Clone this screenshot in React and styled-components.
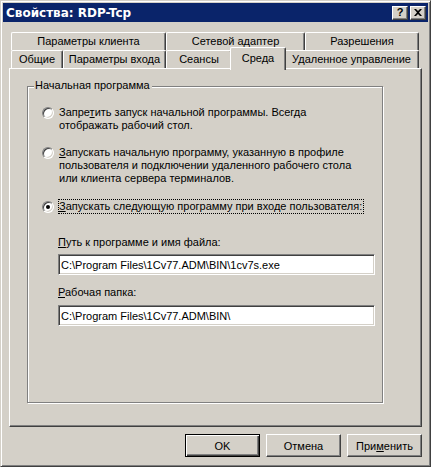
import React from 'react';
import styled, { createGlobalStyle } from 'styled-components';

const Global = createGlobalStyle`
  html, body { margin: 0; padding: 0; background: #d4d0c8; }
  body { font-family: "Liberation Sans", Arial, sans-serif; font-size: 11px; color: #000; }
`;

const Window = styled.div`
  width: 431px;
  height: 467px;
  box-sizing: border-box;
  background: #d4d0c8;
  border: 1px solid;
  border-color: #d4d0c8 #404040 #404040 #d4d0c8;
  box-shadow: inset 1px 1px #fff, inset -1px -1px #808080;
  padding: 2px;
  display: flex;
  flex-direction: column;
`;

const TitleBar = styled.div`
  height: 19px;
  background: #0a246a;
  color: #fff;
  display: flex;
  align-items: center;
  padding: 0 2px 0 2px;
  font-family: "DejaVu Sans", Verdana, sans-serif;
  font-weight: bold;
  font-size: 12px;
`;

const TitleText = styled.div`
  flex: 1;
  padding-left: 1px;
`;

const TitleButtons = styled.div`
  display: flex;
  gap: 2px;
`;

const TitleButton = styled.div`
  width: 16px;
  height: 14px;
  box-sizing: border-box;
  background: #d4d0c8;
  color: #000;
  border: 1px solid;
  border-color: #fff #404040 #404040 #fff;
  box-shadow: inset -1px -1px #808080;
  display: flex;
  align-items: center;
  justify-content: center;
  font-family: "Liberation Sans", Arial, sans-serif;
  font-size: 11px;
  font-weight: bold;
  line-height: 1;
`;

const Body = styled.div`
  flex: 1;
  padding: 10px 6px 0 6px;
  display: flex;
  flex-direction: column;
`;

const TabRow = styled.div`
  display: flex;
  height: 18px;
  padding-left: 2px;
  align-items: flex-start;
`;

const Tab = styled.div`
  width: ${p => (p.$active ? p.$w + 4 : p.$w)}px;
  height: ${p => (p.$active ? 23 : 18)}px;
  margin: ${p => (p.$active ? '-3px -2px 0 -2px' : '0')};
  padding-top: ${p => (p.$active ? 4 : 0)}px;
  box-sizing: border-box;
  position: relative;
  z-index: ${p => (p.$active ? 2 : 1)};
  background: #d4d0c8;
  border-top: 1px solid #fff;
  border-left: 1px solid #fff;
  border-right: 1px solid #404040;
  border-radius: 2px 2px 0 0;
  box-shadow: inset -1px 0 #808080;
  display: flex;
  justify-content: center;
  align-items: ${p => (p.$active ? 'flex-start' : 'center')};
  line-height: 13px;
  white-space: nowrap;
`;

const Panel = styled.div`
  height: 359px;
  box-sizing: border-box;
  border: 1px solid;
  border-color: #fff #404040 #404040 #fff;
  box-shadow: inset -1px -1px #808080;
  padding: 17px 0 0 17px;
`;

const GroupBox = styled.div`
  position: relative;
  width: 356px;
  height: 317px;
  box-sizing: border-box;
  border: 1px solid #808080;
  box-shadow: 1px 1px #fff, inset 1px 1px #fff;
  padding: 19px 0 0 14px;
`;

const Legend = styled.div`
  position: absolute;
  top: -8px;
  left: 6px;
  padding: 0 2px 0 1px;
  background: #d4d0c8;
  line-height: 13px;
`;

const Option = styled.div`
  display: flex;
  align-items: flex-start;
  gap: 5px;
  margin-top: ${p => p.$mt || 0}px;
  line-height: 13px;
`;

const Radio = styled.span`
  flex: none;
  width: 12px;
  height: 12px;
  margin-top: 1px;
  box-sizing: border-box;
  border-radius: 50%;
  border: 1px solid;
  border-color: #808080 #fff #fff #808080;
  box-shadow: inset 1px 1px #404040, inset -1px -1px #d4d0c8;
  background: #fff;
  display: flex;
  align-items: center;
  justify-content: center;
  &::after {
    content: '';
    display: ${p => (p.$checked ? 'block' : 'none')};
    width: 4px;
    height: 4px;
    border-radius: 50%;
    background: #000;
  }
`;

const Focus = styled.span`
  outline: 1px dotted #000;
  outline-offset: 0;
  padding: 0 1px 0 0;
`;

const Key = styled.span`
  text-decoration: underline;
`;

const Field = styled.div`
  margin-left: 16px;
  margin-top: ${p => p.$mt}px;
`;

const FieldLabel = styled.div`
  line-height: 13px;
  margin-bottom: ${p => p.$mb}px;
`;

const TextBox = styled.input`
  display: block;
  width: 317px;
  height: 21px;
  box-sizing: border-box;
  margin: 0;
  padding: 0 0 0 2px;
  border: 1px solid;
  border-color: #808080 #fff #fff #808080;
  box-shadow: inset 1px 1px #404040, inset -1px -1px #d4d0c8;
  background: #fff;
  font-family: "Liberation Sans", Arial, sans-serif;
  font-size: 11px;
  color: #000;
  outline: none;
`;

const ButtonRow = styled.div`
  display: flex;
  justify-content: flex-end;
  gap: 6px;
  margin-top: 7px;
`;

const Button = styled.div`
  width: 75px;
  height: 23px;
  box-sizing: border-box;
  background: #d4d0c8;
  display: flex;
  align-items: center;
  justify-content: center;
  border: 1px solid;
  border-color: ${p => (p.$default ? '#000' : '#fff #404040 #404040 #fff')};
  box-shadow: ${p =>
    p.$default
      ? 'inset 1px 1px #fff, inset -1px -1px #404040, inset -2px -2px #808080'
      : 'inset -1px -1px #808080'};
`;

const topTabs = [
  { label: 'Параметры клиента', w: 155 },
  { label: 'Сетевой адаптер', w: 139 },
  { label: 'Разрешения', w: 114 },
];

const bottomTabs = [
  { label: 'Общие', w: 52 },
  { label: 'Параметры входа', w: 103 },
  { label: 'Сеансы', w: 66 },
  { label: 'Среда', w: 52, active: true },
  { label: 'Удаленное управление', w: 135 },
];

function CloseIcon() {
  return (
    <svg width="8" height="7" viewBox="0 0 8 7">
      <path d="M0 0h2l2 2 2-2h2L5 3.5 8 7H6L4 5 2 7H0l3-3.5z" fill="#000" />
    </svg>
  );
}

export default function App() {
  return (
    <>
      <Global />
      <Window>
        <TitleBar>
          <TitleText>Свойства: RDP-Tcp</TitleText>
          <TitleButtons>
            <TitleButton>?</TitleButton>
            <TitleButton><CloseIcon /></TitleButton>
          </TitleButtons>
        </TitleBar>
        <Body>
          <TabRow>
            {topTabs.map(t => (
              <Tab key={t.label} $w={t.w}>{t.label}</Tab>
            ))}
          </TabRow>
          <TabRow>
            {bottomTabs.map(t => (
              <Tab key={t.label} $w={t.w} $active={t.active}>{t.label}</Tab>
            ))}
          </TabRow>
          <Panel>
            <GroupBox>
              <Legend>Начальная программа</Legend>
              <Option>
                <Radio />
                <span>Запре<Key>т</Key>ить запуск начальной программы. Всегда<br />отображать рабочий стол.</span>
              </Option>
              <Option $mt={14}>
                <Radio />
                <span><Key>З</Key>апускать начальную программу, указанную в профиле<br />пользователя и подключении удаленного рабочего стола<br />или клиента сервера терминалов.</span>
              </Option>
              <Option $mt={15}>
                <Radio $checked />
                <Focus><Key>З</Key>апускать следующую программу при входе пользователя:</Focus>
              </Option>
              <Field $mt={23}>
                <FieldLabel $mb={5}><Key>П</Key>уть к программе и имя файла:</FieldLabel>
                <TextBox readOnly value={'C:\\Program Files\\1Cv77.ADM\\BIN\\1cv7s.exe'} />
              </Field>
              <Field $mt={11}>
                <FieldLabel $mb={6}><Key>Р</Key>абочая папка:</FieldLabel>
                <TextBox readOnly value={'C:\\Program Files\\1Cv77.ADM\\BIN\\'} />
              </Field>
            </GroupBox>
          </Panel>
          <ButtonRow>
            <Button $default>OK</Button>
            <Button>Отмена</Button>
            <Button>При<Key>м</Key>енить</Button>
          </ButtonRow>
        </Body>
      </Window>
    </>
  );
}
